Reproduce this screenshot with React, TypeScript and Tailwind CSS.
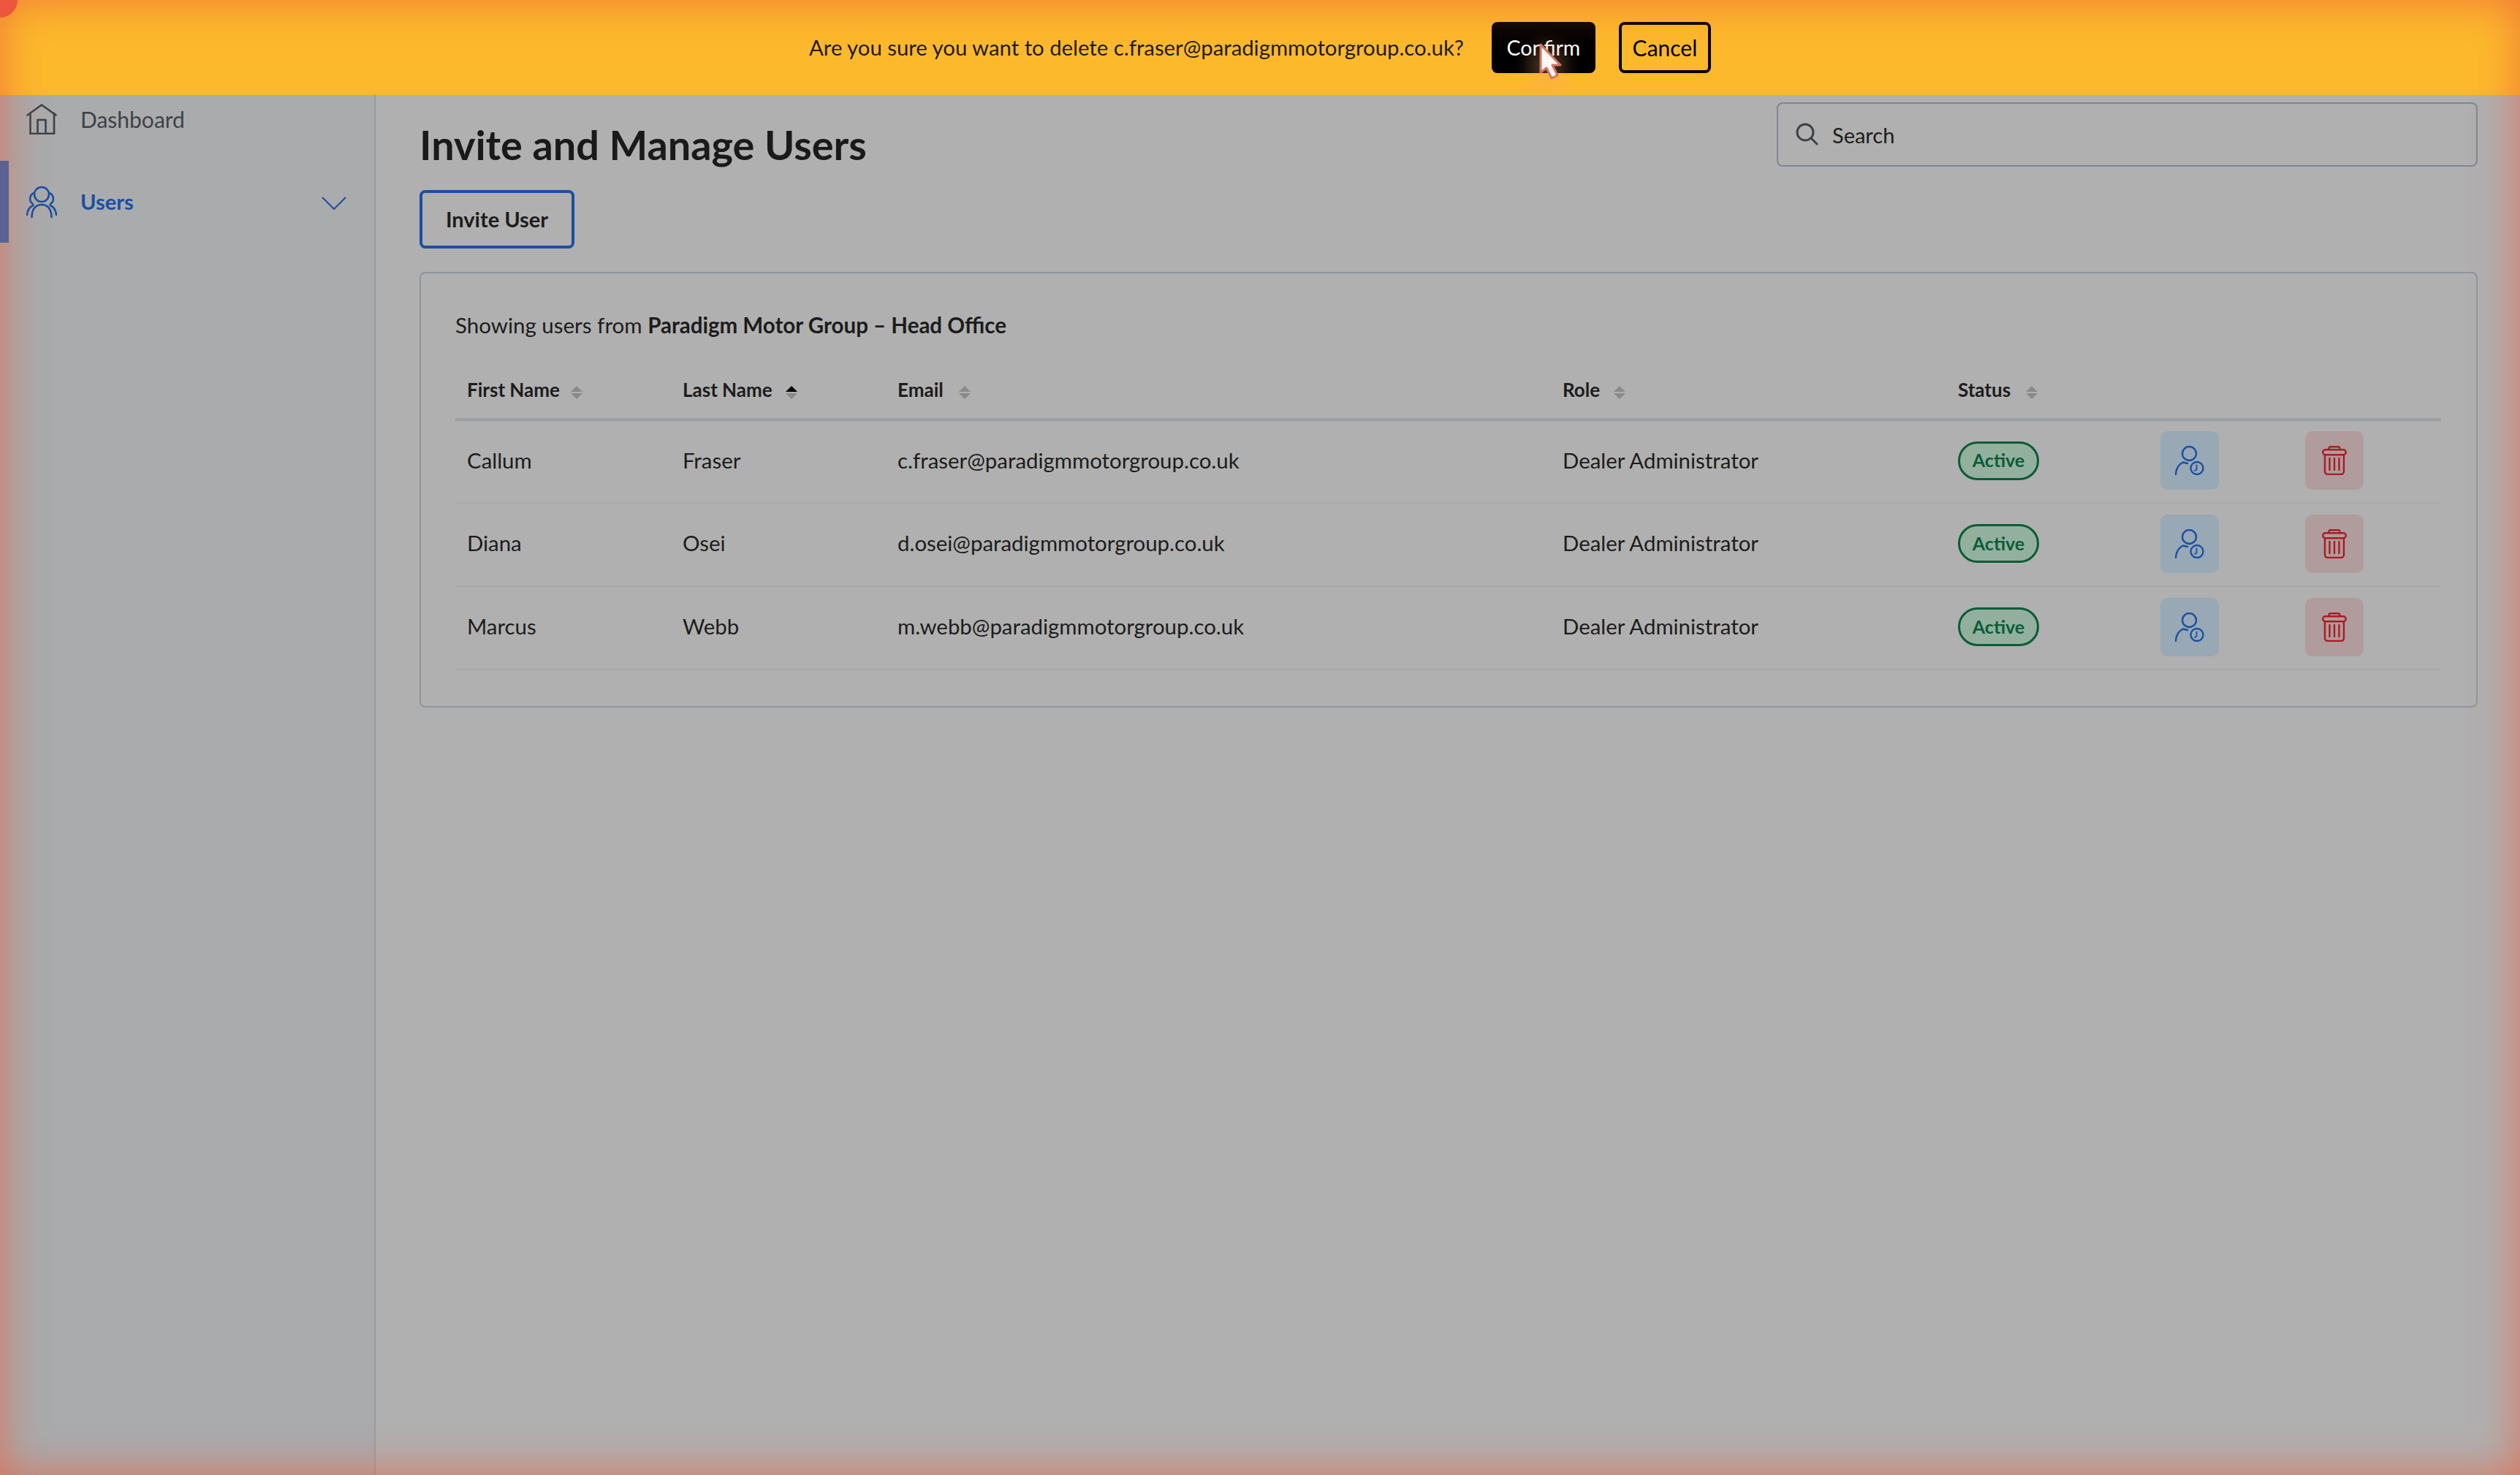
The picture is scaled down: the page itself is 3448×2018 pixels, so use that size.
const users = [
  { first: 'Callum', last: 'Fraser', email: 'c.fraser@paradigmmotorgroup.co.uk' },
  { first: 'Diana', last: 'Osei', email: 'd.osei@paradigmmotorgroup.co.uk' },
  { first: 'Marcus', last: 'Webb', email: 'm.webb@paradigmmotorgroup.co.uk' },
];

const columns = [
  { label: 'First Name', width: 'w-[295px]', gap: 'ml-[15px]' },
  { label: 'Last Name', width: 'w-[294px]', gap: 'ml-[18px]' },
  { label: 'Email', width: 'w-[910px]', gap: 'ml-[21px]' },
  { label: 'Role', width: 'w-[541px]', gap: 'ml-[19px]' },
  { label: 'Status', width: 'w-[277px]', gap: 'ml-[21px]' },
];

const SortArrows = ({ active = false, gap }: { active?: boolean; gap: string }) => (
  <svg width="16" height="18" viewBox="0 0 16 18" className={`${gap} mt-[14px] shrink-0`}>
    <path d="M8 0L16 8H0Z" fill={active ? '#000000' : '#8a8a8a'} />
    <path d="M0 10H16L8 18Z" fill="#8a8a8a" />
  </svg>
);

const HouseIcon = () => (
  <svg width="42" height="42" viewBox="0 0 42 42" fill="none" stroke="#3e4246" strokeWidth="2.6" strokeLinejoin="round" strokeLinecap="round">
    <path d="M1.5 15.5L21 1.5L40.5 15.5" />
    <path d="M5.5 13V41H38V13" />
    <path d="M5.5 41H38M15.5 41V22H26.5V41" />
  </svg>
);

const UsersIcon = () => (
  <svg width="42" height="46" viewBox="0 0 42 46" fill="none" stroke="#1a4fa3" strokeWidth="2.6" strokeLinecap="round">
    <circle cx="21" cy="13" r="10" />
    <path d="M10.5 11C5 13 2.5 22 9 26" />
    <path d="M31.5 11C37 13 39.5 22 33 26" />
    <path d="M7.5 44C7.5 33 13 27 21 27C29 27 34.5 33 34.5 44" />
    <path d="M1 41C1.5 35 4 30 9.5 28" />
    <path d="M41 41C40.5 35 38 30 32.5 28" />
  </svg>
);

const UserClockIcon = () => (
  <svg width="40" height="40" viewBox="0 0 40 40" fill="none" stroke="#1a4fa3" strokeWidth="2.4" strokeLinecap="round" strokeLinejoin="round">
    <circle cx="19.5" cy="10.5" r="9.5" />
    <path d="M1 39C1.5 31 5.5 25 11 22.5C13 23 15 23.5 17 24" />
    <circle cx="30" cy="30.5" r="8.5" />
    <path d="M29.5 26.5V32.5L27 34" strokeWidth="1.8" />
  </svg>
);

const TrashIcon = () => (
  <svg width="34" height="40" viewBox="0 0 34 40" fill="none" stroke="#a81c24" strokeWidth="2.4" strokeLinecap="round" strokeLinejoin="round">
    <path d="M9.5 5V3.5A2.5 2.5 0 0 1 12 1.2H22A2.5 2.5 0 0 1 24.5 3.5V5" />
    <rect x="1.2" y="5.2" width="31.6" height="7" rx="3.5" />
    <path d="M4 12.2V35A4 4 0 0 0 8 39H26A4 4 0 0 0 30 35V12.2" />
    <path d="M10.5 17V33M17 17V33M23.5 17V33" />
  </svg>
);

export default function App() {
  return (
    <div className="relative flex h-[2018px] w-[3448px] flex-col overflow-hidden bg-[#b0b0b0] font-['Lato',sans-serif] text-[#1c1c1c]">
      {/* Confirm banner */}
      <div className="flex h-[130px] shrink-0 items-center justify-center bg-[#fdb92c]">
        <span className="mr-[38px] text-[29.3px]">Are you sure you want to delete c.fraser@paradigmmotorgroup.co.uk?</span>
        <button className="mr-[32px] flex h-[70px] w-[142px] items-center justify-center rounded-[8px] bg-black text-[28.5px] text-white">
          Confirm
        </button>
        <button className="flex h-[70px] w-[126px] items-center justify-center rounded-[8px] border-[4px] border-black text-[30px] text-black">
          Cancel
        </button>
      </div>

      <div className="flex flex-1">
        {/* Sidebar */}
        <aside className="w-[514px] shrink-0 border-r-[2px] border-[#9a9c9e] bg-[#a9abad]">
          <div className="flex h-[70px] items-center pb-[4px] pl-[36px]">
            <HouseIcon />
            <span className="ml-[32px] text-[30px] text-[#3e4246]">Dashboard</span>
          </div>
          <div className="relative mt-[20px] flex h-[112px] items-center pl-[36px] pr-[38px]">
            <div className="absolute bottom-0 left-0 top-0 z-10 w-[12px] bg-[#5a6294]" />
            <UsersIcon />
            <span className="ml-[32px] flex-1 text-[29px] font-bold text-[#1a4fa3]">Users</span>
            <svg width="34" height="18" viewBox="0 0 34 18" fill="none" stroke="#1a4fa3" strokeWidth="2" className="mt-[4px]">
              <path d="M1 1L17 17L33 1" />
            </svg>
          </div>
        </aside>

        {/* Main content */}
        <main className="flex-1 pl-[60px] pr-[58px] pt-[10px]">
          <div className="flex items-start justify-between">
            <h1 className="mt-[28px] text-[55.8px] font-bold leading-[60px] text-[#1a1a1a]">Invite and Manage Users</h1>
            <div className="flex h-[88px] w-[959px] items-center rounded-[8px] border-[2px] border-[#7f8792] pl-[24px]">
              <svg width="32" height="32" viewBox="0 0 32 32" fill="none" stroke="#3e4246" strokeWidth="3" strokeLinecap="round">
                <circle cx="13" cy="13" r="11" />
                <path d="M21 21L29 29" />
              </svg>
              <span className="ml-[18px] pt-[2px] text-[29px]">Search</span>
            </div>
          </div>

          <button className="mt-[32px] flex h-[80px] w-[212px] items-center justify-center rounded-[8px] border-[4px] border-[#1a4fa3] text-[29px] font-bold">
            Invite User
          </button>

          {/* Users card */}
          <div className="mt-[32px] h-[596px] rounded-[8px] border-[2px] border-[#8f959c] pl-[47px] pr-[48px] pt-[53px]">
            <p className="text-[29.5px] leading-[36px]">
              Showing users from <span className="font-bold">Paradigm Motor Group – Head Office</span>
            </p>
            <table className="mt-[51px] w-full table-fixed text-[29.4px]">
              <thead>
                <tr className="h-[60px] border-b-[4px] border-[#9a9ea2] text-left align-top text-[26px]">
                  {columns.map((col) => (
                    <th key={col.label} className={`${col.width} pl-[16px] font-bold`}>
                      <div className="flex items-start">
                        {col.label}
                        <SortArrows active={col.label === 'Last Name'} gap={col.gap} />
                      </div>
                    </th>
                  ))}
                  <th className="w-[198px]" />
                  <th />
                </tr>
              </thead>
              <tbody>
                {users.map((user) => (
                  <tr key={user.email} className="h-[114px] border-b-[2px] border-[#a8a8a8]">
                    <td className="pb-[3px] pl-[16px]">{user.first}</td>
                    <td className="pb-[3px] pl-[16px]">{user.last}</td>
                    <td className="pb-[3px] pl-[16px]">{user.email}</td>
                    <td className="pb-[3px] pl-[16px]">Dealer Administrator</td>
                    <td className="pb-[3px] pl-[16px]">
                      <span className="flex h-[53px] w-[111px] items-center justify-center rounded-full border-[3px] border-[#0a5c36] bg-[#93b09e] text-[25px] font-bold text-[#0a5c36]">
                        Active
                      </span>
                    </td>
                    <td className="pb-[3px] pl-[16px]">
                      <button className="flex h-[80px] w-[80px] items-center justify-center rounded-[10px] bg-[#98a8b5]">
                        <UserClockIcon />
                      </button>
                    </td>
                    <td className="pb-[3px] pl-[16px]">
                      <button className="flex h-[80px] w-[80px] items-center justify-center rounded-[10px] bg-[#b09c9c]">
                        <TrashIcon />
                      </button>
                    </td>
                  </tr>
                ))}
              </tbody>
            </table>
          </div>
        </main>
      </div>

      {/* Cursor over the confirm button */}
      <div className="pointer-events-none absolute left-[2092px] top-[60px] h-[60px] w-[50px] rounded-full bg-[#f2a070] opacity-30 blur-[12px]" />
      <svg className="pointer-events-none absolute left-[2104px] top-[58px]" width="36" height="52" viewBox="0 0 36 52">
        <path d="M4 3L31 31L20 31L27 45L19 49L12 35L4 41Z" fill="#fbf8f5" stroke="#d4755e" strokeWidth="3" strokeLinejoin="round" />
      </svg>

      {/* Recording dot and red edge glow */}
      <div className="pointer-events-none absolute -left-[24px] -top-[24px] h-[48px] w-[48px] rounded-full bg-[#ef5040]" />
      <div className="pointer-events-none absolute inset-0 shadow-[inset_0_0_60px_rgba(235,95,60,0.75)]" />
    </div>
  );
}
